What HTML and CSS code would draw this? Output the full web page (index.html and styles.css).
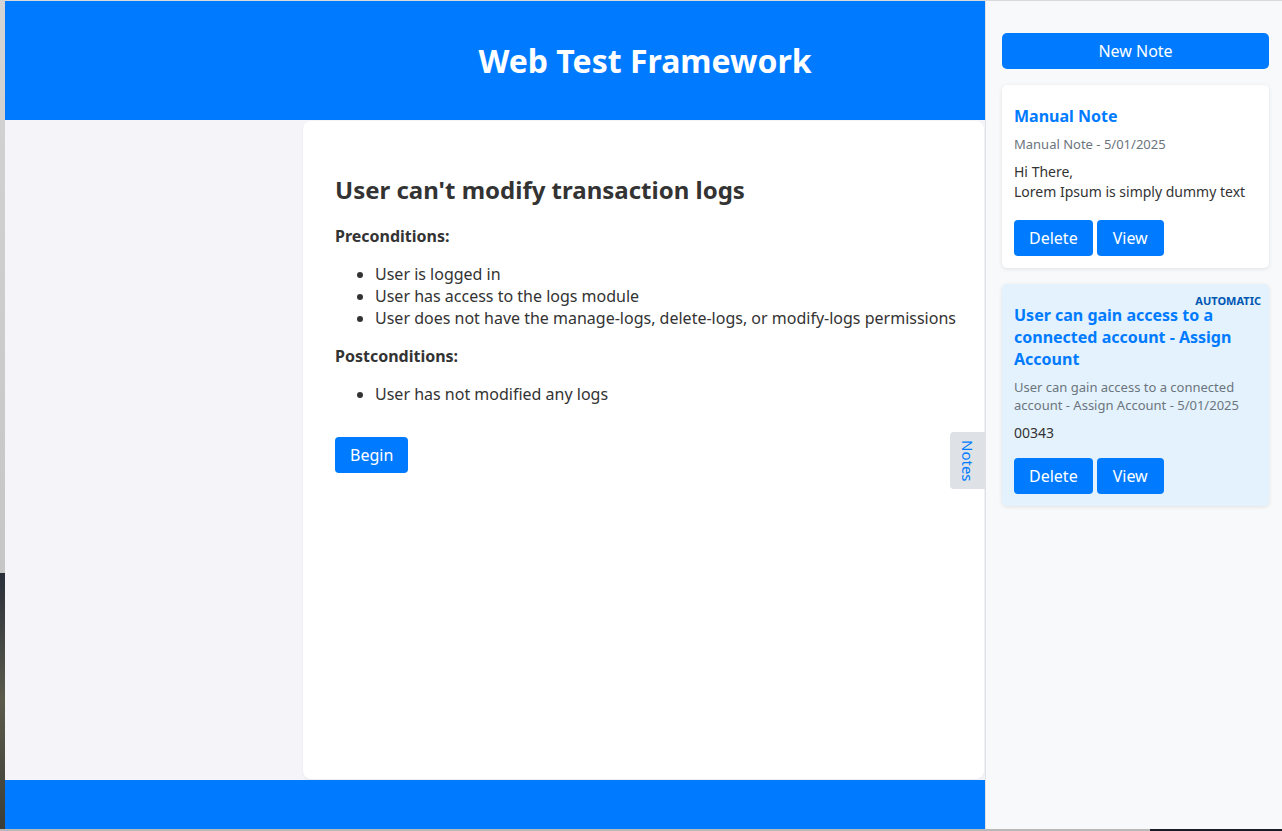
FILE: index.html
```html
<!DOCTYPE html>
<html lang="en">
<head>
<meta charset="utf-8">
<title>Web Test Framework</title>
<link rel="stylesheet" href="styles.css">
</head>
<body>
<div class="frame">
  <div class="app">
    <header class="app-header">
      <h1 class="app-title">Web Test Framework</h1>
    </header>
    <div class="app-body">
      <aside class="sidebar"></aside>
      <main class="test-card">
        <h2 class="test-title">User can't modify transaction logs</h2>
        <h4 class="section-title">Preconditions:</h4>
        <ul class="cond-list">
          <li>User is logged in</li>
          <li>User has access to the logs module</li>
          <li>User does not have the manage-logs, delete-logs, or modify-logs permissions</li>
        </ul>
        <h4 class="section-title">Postconditions:</h4>
        <ul class="cond-list">
          <li>User has not modified any logs</li>
        </ul>
        <button class="btn btn-begin">Begin</button>
      </main>
    </div>
    <footer class="app-footer"></footer>
  </div>

  <section class="notes-panel">
    <button class="notes-tab">Notes</button>
    <button class="btn btn-block">New Note</button>
    <article class="note">
      <h3 class="note-title">Manual Note</h3>
      <p class="note-meta">Manual Note - 5/01/2025</p>
      <p class="note-body">Hi There,<br>Lorem Ipsum is simply dummy text</p>
      <div class="note-actions">
        <button class="btn">Delete</button>
        <button class="btn">View</button>
      </div>
    </article>
    <article class="note note-auto">
      <span class="note-badge">AUTOMATIC</span>
      <h3 class="note-title">User can gain access to a connected account - Assign Account</h3>
      <p class="note-meta">User can gain access to a connected account - Assign Account - 5/01/2025</p>
      <p class="note-body">00343</p>
      <div class="note-actions">
        <button class="btn">Delete</button>
        <button class="btn">View</button>
      </div>
    </article>
  </section>
</div>
</body>
</html>
```

FILE: styles.css
```css
* { box-sizing: border-box; }

html, body {
  margin: 0;
  height: 831px;
  overflow: hidden;
}

body {
  font-family: "Noto Sans", "Open Sans", sans-serif;
  color: #333;
  background:
    linear-gradient(to right, #b9b9b9 0, #b9b9b9 1150px, #1a1c28 1150px) bottom / 100% 2px no-repeat,
    linear-gradient(to bottom, #d4d4d4 0, #c6c6c6 573px, #2a2f3a 573px, #5b5b4c 700px, #3c3d36 829px) left / 5px 100% no-repeat,
    #d9dade;
}

.frame {
  position: relative;
  height: 831px;
  padding: 1px 0 2px 5px;
}

.app {
  height: 100%;
  display: flex;
  flex-direction: column;
  background: #f4f4f9;
}

.app-header {
  height: 119px;
  flex: none;
  background: #007bff;
  display: flex;
  align-items: center;
  justify-content: center;
}

.app-title {
  margin: 0;
  color: #fff;
  font-size: 32px;
  font-weight: 700;
  line-height: 40px;
  padding-left: 3px;
}

.app-body {
  flex: 1;
  display: flex;
  padding: 1px 0 1px;
}

.sidebar {
  width: 298px;
  flex: none;
}

.test-card {
  width: 681px;
  flex: none;
  background: #fff;
  border-radius: 8px;
  box-shadow: 0 1px 3px rgba(0, 0, 0, 0.06);
  padding: 21px 16px 32px 32px;
}

.test-title {
  margin: 32px 0 0;
  font-size: 24px;
  line-height: 32px;
  font-weight: 700;
}

.section-title {
  margin: 19px 0 0;
  font-size: 16px;
  line-height: 22px;
  font-weight: 700;
}

.cond-list + .section-title {
  margin-top: 16px;
}

.cond-list {
  margin: 16px 0 0;
  padding-left: 40px;
  font-size: 16px;
  line-height: 22px;
}

.app-footer {
  height: 49px;
  flex: none;
  background: #007bff;
}

.btn {
  font-family: "Noto Sans", "Open Sans", sans-serif;
  font-size: 16px;
  line-height: 22px;
  height: 36px;
  padding: 0 15px;
  border: none;
  border-radius: 4px;
  background: #007bff;
  color: #fff;
  cursor: pointer;
}

.btn-begin {
  margin-top: 32px;
}

.notes-panel {
  position: absolute;
  top: 1px;
  right: 0;
  bottom: 2px;
  width: 297px;
  background: #f8f9fa;
  border-left: 1px solid #dee2e6;
  padding: 32px 13px 16px 16px;
}

.notes-tab {
  position: absolute;
  left: -36px;
  top: 431px;
  width: 35px;
  height: 57px;
  padding: 0;
  border: none;
  border-radius: 4px 0 0 4px;
  background: #dee2e6;
  color: #007bff;
  font-family: "Noto Sans", "Open Sans", sans-serif;
  font-size: 15px;
  writing-mode: vertical-rl;
  display: flex;
  align-items: center;
  justify-content: center;
}

.btn-block {
  display: block;
  width: 100%;
  border-radius: 5px;
}

.note {
  position: relative;
  margin-top: 16px;
  background: #fff;
  border-radius: 5px;
  box-shadow: 0 1px 4px rgba(0, 0, 0, 0.1);
  padding: 20px 12px 12px;
}

.note-auto {
  background: #e3f2fd;
}

.note-badge {
  position: absolute;
  top: 11px;
  right: 8px;
  font-size: 11px;
  line-height: 12px;
  font-weight: 700;
  color: #0056b3;
}

.note-title {
  margin: 0;
  font-size: 16px;
  line-height: 22px;
  font-weight: 700;
  color: #007bff;
}

.note-meta {
  margin: 8px 0 0;
  font-size: 13px;
  line-height: 18px;
  color: #6c757d;
}

.note-body {
  margin: 9px 0 0;
  font-size: 14px;
  line-height: 20px;
  color: #333;
}

.note-actions {
  margin-top: 18px;
  display: flex;
  gap: 4px;
}

.note-actions .btn + .btn {
  padding: 0 16px;
}

.note-auto .note-actions {
  margin-top: 15px;
}
```
